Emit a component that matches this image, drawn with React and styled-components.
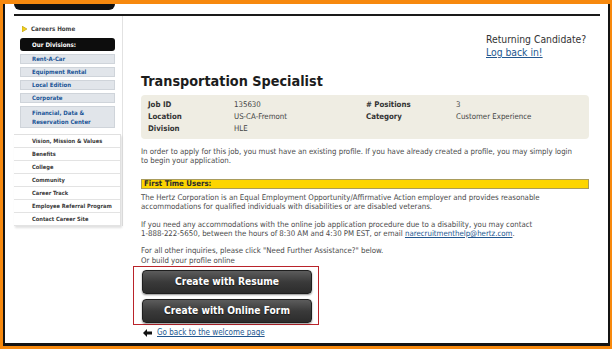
import React from "react";
import styled, { createGlobalStyle } from "styled-components";

const SANS = '"DejaVu Sans Condensed", "DejaVu Sans", "Liberation Sans", sans-serif';

const Global = createGlobalStyle`
  html, body { margin: 0; padding: 0; background: #f7890e; }
  * { box-sizing: border-box; }
  body { font-family: ${SANS}; }
`;

const Frame = styled.div`
  width: 612px;
  height: 349px;
  padding: 4px 2px 3px 3px;
  background: #f7890e;
  overflow: hidden;
`;

const Window = styled.div`
  height: 100%;
  background: #fff;
  border-left: 2px solid #141414;
  border-right: 2px solid #141414;
  border-bottom: 3px solid #141414;
  padding: 0 8px 0 9px;
  display: flex;
  flex-direction: column;
`;

const Tab = styled.div`
  width: 101px;
  height: 6px;
  background: #111;
  border-radius: 0 0 7px 7px;
`;

const Rule = styled.div`
  height: 2px;
  margin-top: 4px;
  background: #1a1a1a;
`;

const Body = styled.div`
  flex: 1;
  display: grid;
  grid-template-columns: 108px 1fr;
  column-gap: 19px;
`;

/* ---------- sidebar ---------- */
const Sidebar = styled.nav`
  display: flex;
  flex-direction: column;
  padding-top: 6px;
  align-self: start;
  border-right: 1px solid #e2e2e2;
  margin-right: -1px;
`;

const HomeRow = styled.div`
  height: 14px;
  display: flex;
  align-items: center;
  padding-left: 8px;
  gap: 4px;
  font: bold 6.2px/14px ${SANS};
  color: #3d3d3d;
`;

const DivHeader = styled.div`
  margin: 2px 7px 0 6px;
  height: 13px;
  background: #0d0d0d;
  border-radius: 3px;
  color: #fff;
  font: bold 6.2px/13px ${SANS};
  padding-left: 12px;
`;

const DivItem = styled.div`
  margin: 3px 7px 0 6px;
  height: ${(p) => (p.$tall ? 22 : 10)}px;
  background: #e1e5ea;
  border: 1px solid #cfd4da;
  color: #1b5597;
  font: bold 6px/${(p) => (p.$tall ? 9 : 8)}px ${SANS};
  padding: ${(p) => (p.$tall ? "1px" : "0")} 0 0 11px;
`;

const LinkList = styled.div`
  margin-top: 6px;
  width: 107px;
  border-top: 1px solid #e0e0e0;
  border-right: 1px solid #e0e0e0;
  box-shadow: 1px 2px 2px rgba(0, 0, 0, 0.12);
`;

const LinkRow = styled.div`
  height: 13px;
  border-bottom: 1px solid #e3e3e3;
  padding-left: 18px;
  font: bold 5.7px/12px ${SANS};
  color: #3a3a3a;
  white-space: nowrap;
`;

/* ---------- main ---------- */
const Main = styled.main`
  display: flex;
  flex-direction: column;
  padding-right: 11px;
  color: #474747;
`;

const Returning = styled.div`
  align-self: flex-end;
  margin-top: 17px;
  margin-right: 1px;
  width: 102px;
  font: 10.3px/13px ${SANS};
  color: #333;
`;

const Link = styled.a`
  color: #22578f;
  text-decoration: underline;
`;

const Title = styled.h1`
  margin: 14px 0 0;
  font: bold 14.3px/16px ${SANS};
  color: #1c1c1c;
`;

const InfoBox = styled.div`
  margin-top: 6px;
  background: #efede3;
  border-radius: 4px;
  padding: 4px 7px;
  display: grid;
  grid-template-columns: 86px 132px 90px 1fr;
  font: 7.8px/12px ${SANS};
  color: #444;
`;

const Label = styled.span`
  font-weight: bold;
  color: #333;
`;

const Para = styled.p`
  margin: ${(p) => p.$mt}px 0 0;
  font: 7.8px/9.4px ${SANS};
  color: #4a4a4a;
  white-space: nowrap;
`;

const YellowBar = styled.div`
  margin-top: 13px;
  height: 10px;
  background: #fdd500;
  border: 1px solid #a99c5c;
  padding-left: 2px;
  font: bold 7.8px/8px ${SANS};
  color: #2b2b2b;
`;

const ButtonBox = styled.div`
  margin: 1px 0 0 -8px;
  width: 186px;
  border: 1px solid #b9232a;
  padding: 3px 0 1px 8px;
  display: flex;
  flex-direction: column;
  gap: 5px;
`;

const Button = styled.button`
  width: 170px;
  height: 24px;
  border: 1px solid #1e1e1e;
  border-radius: 4px;
  background: linear-gradient(#5c5c5c, #3a3a3a 50%, #2c2c2c);
  box-shadow: 0 1px 2px rgba(0, 0, 0, 0.45);
  color: #fff;
  font: bold 10.2px/20px ${SANS};
  text-shadow: 0 1px 1px rgba(0, 0, 0, 0.6);
  padding: 0;
  cursor: pointer;
`;

const BackRow = styled.div`
  margin-top: 3px;
  display: flex;
  align-items: center;
  gap: 5px;
  padding-left: 2px;
  font: 8px/10px ${SANS};
`;

const ArrowIcon = () => (
  <svg width="9" height="8" viewBox="0 0 9 8" aria-hidden="true">
    <path d="M0 4 L4 0 L4 2.6 L9 2.6 L9 5.4 L4 5.4 L4 8 Z" fill="#111" />
  </svg>
);

const TriIcon = () => (
  <svg width="5" height="6" viewBox="0 0 5 6" aria-hidden="true">
    <path d="M0 0 L5 3 L0 6 Z" fill="#f2cf1c" stroke="#b79a10" strokeWidth="0.6" />
  </svg>
);

const divisions = [
  "Rent-A-Car",
  "Equipment Rental",
  "Local Edition",
  "Corporate",
];

const links = [
  "Vision, Mission & Values",
  "Benefits",
  "College",
  "Community",
  "Career Track",
  "Employee Referral Program",
  "Contact Career Site",
];

export default function App() {
  return (
    <>
      <Global />
      <Frame>
        <Window>
          <Tab />
          <Rule />
          <Body>
            <Sidebar>
              <HomeRow>
                <TriIcon />
                Careers Home
              </HomeRow>
              <DivHeader>Our Divisions:</DivHeader>
              {divisions.map((d) => (
                <DivItem key={d}>{d}</DivItem>
              ))}
              <DivItem $tall>
                Financial, Data &amp;
                <br />
                Reservation Center
              </DivItem>
              <LinkList>
                {links.map((l) => (
                  <LinkRow key={l}>{l}</LinkRow>
                ))}
              </LinkList>
            </Sidebar>
            <Main>
              <Returning>
                Returning Candidate?
                <br />
                <Link href="#">Log back in!</Link>
              </Returning>
              <Title>Transportation Specialist</Title>
              <InfoBox>
                <Label>Job ID</Label>
                <span>135630</span>
                <Label># Positions</Label>
                <span>3</span>
                <Label>Location</Label>
                <span>US-CA-Fremont</span>
                <Label>Category</Label>
                <span>Customer Experience</span>
                <Label>Division</Label>
                <span>HLE</span>
              </InfoBox>
              <Para $mt={8}>
                In order to apply for this job, you must have an existing profile. If you have
                already created a profile, you may simply login
                <br />
                to begin your application.
              </Para>
              <YellowBar>First Time Users:</YellowBar>
              <Para $mt={4}>
                The Hertz Corporation is an Equal Employment Opportunity/Affirmative Action
                employer and provides reasonable
                <br />
                accommodations for qualified individuals with disabilities or are disabled veterans.
              </Para>
              <Para $mt={8}>
                If you need any accommodations with the online job application procedure due to a
                disability, you may contact
                <br />
                1-888-222-5650, between the hours of 8:30 AM and 4:30 PM EST, or email{" "}
                <Link href="#">narecruitmenthelp@hertz.com</Link>.
              </Para>
              <Para $mt={8}>
                For all other inquiries, please click "Need Further Assistance?" below.
                <br />
                Or build your profile online
              </Para>
              <ButtonBox>
                <Button>Create with Resume</Button>
                <Button>Create with Online Form</Button>
              </ButtonBox>
              <BackRow>
                <ArrowIcon />
                <Link href="#">Go back to the welcome page</Link>
              </BackRow>
            </Main>
          </Body>
        </Window>
      </Frame>
    </>
  );
}
